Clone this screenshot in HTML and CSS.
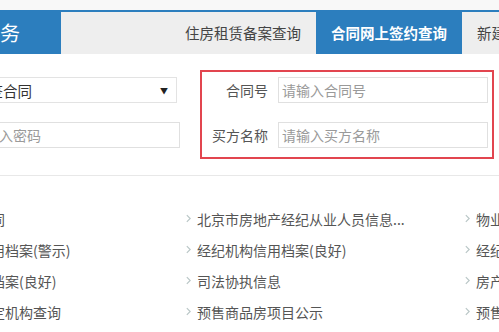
FILE: index.html
```html
<!DOCTYPE html>
<html lang="zh-CN">
<head>
<meta charset="utf-8">
<title>合同网上签约查询</title>
<link rel="stylesheet" href="styles.css">
</head>
<body>
<div class="page">
  <div class="topstrip"></div>
  <header class="tabbar">
    <div class="brand">网上服务</div>
    <div class="spacer"></div>
    <div class="tab">住房租赁备案查询</div>
    <div class="tab active">合同网上签约查询</div>
    <div class="tab">新建商品房源查询</div>
  </header>

  <section class="forms">
    <div class="leftform">
      <div class="select"><span class="seltext">网签合同</span><span class="arrow">▼</span></div>
      <input class="field pwd" type="text" placeholder="请输入密码">
    </div>
    <div class="highlight">
      <label class="lbl">合同号</label>
      <input class="field" type="text" placeholder="请输入合同号">
      <label class="lbl">买方名称</label>
      <input class="field" type="text" placeholder="请输入买方名称">
    </div>
  </section>

  <ul class="links">
    <li><svg class="chev" viewBox="0 0 6 10"><polyline points="1,1 5,5 1,9"/></svg><span>存量房网签合同</span></li>
    <li><svg class="chev" viewBox="0 0 6 10"><polyline points="1,1 5,5 1,9"/></svg><span>北京市房地产经纪从业人员信息...</span></li>
    <li><svg class="chev" viewBox="0 0 6 10"><polyline points="1,1 5,5 1,9"/></svg><span>物业服务企业信息</span></li>

    <li><svg class="chev" viewBox="0 0 6 10"><polyline points="1,1 5,5 1,9"/></svg><span>房地产经纪信用档案(警示)</span></li>
    <li><svg class="chev" viewBox="0 0 6 10"><polyline points="1,1 5,5 1,9"/></svg><span>经纪机构信用档案(良好)</span></li>
    <li><svg class="chev" viewBox="0 0 6 10"><polyline points="1,1 5,5 1,9"/></svg><span>经纪人员信用档案(良好)</span></li>

    <li><svg class="chev" viewBox="0 0 6 10"><polyline points="1,1 5,5 1,9"/></svg><span>经纪机构信用档案(良好)</span></li>
    <li><svg class="chev" viewBox="0 0 6 10"><polyline points="1,1 5,5 1,9"/></svg><span>司法协执信息</span></li>
    <li><svg class="chev" viewBox="0 0 6 10"><polyline points="1,1 5,5 1,9"/></svg><span>房产测绘成果查询</span></li>

    <li><svg class="chev" viewBox="0 0 6 10"><polyline points="1,1 5,5 1,9"/></svg><span>房屋安全性鉴定机构查询</span></li>
    <li><svg class="chev" viewBox="0 0 6 10"><polyline points="1,1 5,5 1,9"/></svg><span>预售商品房项目公示</span></li>
    <li><svg class="chev" viewBox="0 0 6 10"><polyline points="1,1 5,5 1,9"/></svg><span>预售许可证查询</span></li>
  </ul>
</div>
</body>
</html>
```

FILE: styles.css
```css
html, body {
  margin: 0;
  padding: 0;
  background: #ffffff;
  overflow: hidden;
}
body {
  width: 499px;
  height: 332px;
  font-family: "Noto Sans CJK SC", "Noto Sans", sans-serif;
  color: #555;
}
.page {
  margin-left: -100px;
  width: 850px;
}
.topstrip {
  height: 10px;
  background: #f8f8f8;
}
.tabbar {
  display: flex;
  height: 42px;
  border-top: 2px solid #2c7ebe;
  background: #eeeeee;
}
.brand {
  width: 121px;
  padding-left: 40px;
  background: #2c7ebe;
  color: #fff;
  font-size: 20px;
  line-height: 42px;
  white-space: nowrap;
  overflow: hidden;
}
.spacer {
  width: 109px;
}
.tab {
  width: 146px;
  text-align: center;
  font-size: 14.5px;
  line-height: 42px;
  color: #444;
  white-space: nowrap;
}
.tab.active {
  background: #2c7ebe;
  color: #fff;
  font-weight: bold;
}
.forms {
  display: flex;
  align-items: flex-start;
  gap: 20px;
  padding: 16px 0 16px 60px;
  border-bottom: 1px solid #e8e8e8;
}
.leftform {
  display: flex;
  flex-direction: column;
  gap: 19px;
  padding-top: 7px;
  width: 220px;
}
.select {
  box-sizing: border-box;
  width: 217px;
  height: 26px;
  border: 1px solid #e3e3e3;
  display: flex;
  align-items: center;
  justify-content: space-between;
  padding: 0 8px 0 13px;
  font-size: 14.5px;
  color: #333;
  white-space: nowrap;
}
.arrow {
  font-size: 8px;
  color: #222;
}
.field {
  box-sizing: border-box;
  height: 26px;
  margin: 0;
  border: 1px solid #e0e0e0;
  padding: 0 0 0 3px;
  font-family: "Noto Sans CJK SC", "Noto Sans", sans-serif;
  font-size: 14px;
  color: #333;
  outline: none;
}
.field::placeholder {
  color: #9a9a9a;
}
.pwd {
  width: 220px;
  padding-left: 10px;
}
.highlight {
  box-sizing: border-box;
  width: 294px;
  border: 2px solid #e2454f;
  padding: 5px 4px 9px 0;
  display: grid;
  grid-template-columns: 66px 210px;
  column-gap: 10px;
  row-gap: 19px;
  align-items: center;
}
.lbl {
  text-align: right;
  font-size: 14px;
  color: #555;
  white-space: nowrap;
}
.links {
  list-style: none;
  margin: 0 0 0 -4px;
  padding: 27px 0 0 0;
  display: grid;
  grid-template-columns: 290px 279px 279px;
}
.links li {
  display: flex;
  align-items: center;
  gap: 6px;
  height: 31px;
  font-size: 14px;
  color: #555;
  white-space: nowrap;
}
.chev {
  width: 5px;
  height: 9px;
  flex: none;
  fill: none;
  stroke: #b9c6c6;
  stroke-width: 1.4;
}
```
